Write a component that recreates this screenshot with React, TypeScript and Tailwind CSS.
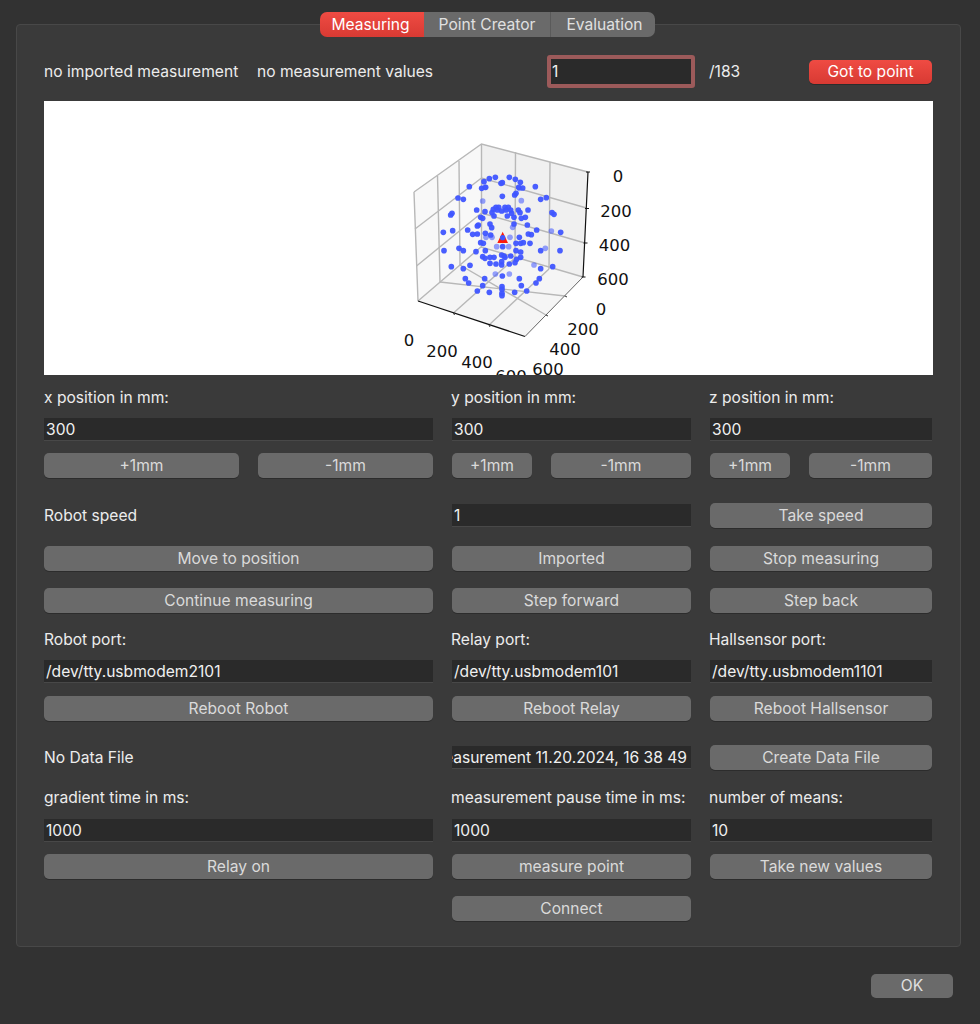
import React from "react";

const ROW = "grid grid-cols-[389px_239px_222px] gap-x-[19px] items-center";
const BTN =
  "flex items-center justify-center rounded-[5px] bg-[#6a6a6a] text-[#dadada] shadow-[0_1px_0_#2c2c2c] h-[25px] w-full";
const FIELD =
  "flex items-center h-[23px] w-full bg-[#2a2a2a] border-b border-[#484848] pl-[2px] pt-[2px] text-[#f0f0f0] overflow-hidden whitespace-nowrap";

function Btn({ children }: { children: React.ReactNode }) {
  return <div className={BTN}>{children}</div>;
}
function Field({ children }: { children: React.ReactNode }) {
  return <div className={FIELD}>{children}</div>;
}
function Label({ children, shift }: { children: React.ReactNode; shift?: boolean }) {
  return (
    <div className={`h-[20px] pt-[1px] flex items-center whitespace-nowrap text-[#ececec] ${shift ? "-ml-[1px]" : ""}`}>
      {children}
    </div>
  );
}

const solid: [number, number][] = [
  [282,155],[298,146],[316,142],[358,142],[376,148],[391,157],[337,158],[333,160],[238,170],[275,175],[287,172],[386,172],[398,174],[436,170],[378,190],[374,195],[337,199],[204,204],[220,208],[452,208],[469,203],
  [318,232],[326,232],[310,238],[322,240],[345,232],[355,232],[362,240],[348,240],[335,243],[306,248],[285,245],[260,240],[385,240],[414,240],[390,248],[365,250],[186,250],[182,255],[486,248],[492,253],[272,262],[278,265],[312,258],[352,258],[372,262],[394,265],[406,262],[265,285],[262,288],[300,282],[372,282],[412,285],[305,293],[233,300],[160,307],[188,302],[440,300],[512,307],[248,313],[262,312],[302,315],[286,310],[388,322],[415,312],[424,314],
  [272,338],[280,340],[378,340],[392,340],[400,338],[420,340],[338,350],[162,362],[207,355],[220,362],[452,362],[510,362],[258,365],[286,362],[378,362],[392,366],[278,380],[285,385],[300,382],[312,382],[335,375],[342,378],[345,382],[362,378],[380,388],[392,382],[300,400],[318,402],[335,395],[335,405],[358,402],[375,398],[240,406],[184,410],[220,416],[452,416],[488,410],[337,438],[226,446],[236,459],[284,446],[388,446],[448,446],[438,459],[278,467],[394,467],[336,470],[336,478],[262,483],[298,487],[374,487],[410,483],[336,490],[336,497],
];
const faint: [number, number][] = [
  [278,213],[394,212],[368,292],[484,303],[288,322],[306,322],[360,322],[320,350],[356,350],[466,355],[432,405],[316,432],[358,432],[285,172],[388,175],
];

function Plot() {
  const grid = "#b8b8b8";
  return (
    <svg width="889" height="274" viewBox="0 0 889 274" className="block bg-white">
      <g transform="translate(-44 -101)">
        <polygon points="414,192 481.5,144 481,247 418,301" fill="#f8f8f8" />
        <polygon points="481.5,144 588,172 583,277 481,247" fill="#f0f0f0" />
        <polygon points="418,301 481,247 583,277 525,336.5" fill="#f5f5f5" />
        <g stroke={grid} strokeWidth="1.4" fill="none">
          <path d="M414 192L481.5 144L588 172M414 192L418 301M481.5 144V247" />
          <path d="M437.5 176L440 282M459 161L460 265M515.5 152L515 258M550 162L549 269" />
          <path d="M415 229L481.5 178L586.500 208M416.500 266L481.500 213L585 243M418 301L481 247L583 277" />
          <path d="M453.500 313L515 258M489 325L549 269M546 315L460 265M565 296L440 282" />
        </g>
        <path d="M418 301L525 336.500" stroke="#111" strokeWidth="1.300" fill="none" />
        <path d="M525 336.500L583 277" stroke="#666" strokeWidth="1" fill="none" />
        <path d="M588 172L583 277M586 172H590M585 208.500H589M583.500 243H587.500M581.500 277H585.500" stroke="#111" strokeWidth="1.200" fill="none" />
        <path d="M453.500 313l1 2M489 325l1 2M546 315l2 1M565 296l2 1" stroke="#333" strokeWidth="1" fill="none" />
        <g transform="translate(390 130) scale(0.33333)">
          {faint.map(([x, y], i) => (
            <circle key={i} cx={x} cy={y} r="8.500" fill="#3f55ff" fillOpacity="0.55" />
          ))}
          {solid.map(([x, y], i) => (
            <circle key={i} cx={x} cy={y} r="8.500" fill="#3f55ff" fillOpacity="0.95" />
          ))}
          <polygon points="338,305 322,339 354,339" fill="#ff1a0a" />
          <circle cx="338" cy="323" r="8" fill="#3f55ff" />
        </g>
        <g fontFamily="'DejaVu Sans', sans-serif" fontSize="16.500" fill="#111" dominantBaseline="central" textAnchor="middle">
          <text x="618" y="176">0</text>
          <text x="616" y="211">200</text>
          <text x="614.500" y="245">400</text>
          <text x="613" y="279">600</text>
          <text x="601" y="309">0</text>
          <text x="583" y="329">200</text>
          <text x="565" y="349">400</text>
          <text x="548" y="369">600</text>
          <text x="409" y="340">0</text>
          <text x="442" y="351">200</text>
          <text x="477" y="362">400</text>
          <text x="511" y="376">600</text>
        </g>
      </g>
    </svg>
  );
}

export default function App() {
  return (
    <div className="w-[980px] h-[1024px] bg-[#323232] pt-[24px] pl-[16px] font-['Inter','Liberation_Sans',sans-serif] text-[15.600px] leading-none overflow-hidden">
      <div className="relative w-[945px] h-[923px] bg-[#3a3a3a] border border-[#484848] rounded-[4px] pt-[30px] pl-[27px]">
        <div className="absolute left-[303px] top-[-13px] flex h-[25px] w-[335px] rounded-[7px] overflow-hidden">
          <div className="w-[104px] pr-[3px] flex items-center justify-center bg-gradient-to-b from-[#ef4b43] to-[#d83a33] text-white">Measuring</div>
          <div className="w-[127px] flex items-center justify-center bg-[#6a6a6a] text-[#e0e0e0] border-r border-[#5a5a5a]">Point Creator</div>
          <div className="flex-1 pl-[3px] flex items-center justify-center bg-[#6a6a6a] text-[#e0e0e0]">Evaluation</div>
        </div>

        <div className="flex items-center h-[33px] text-[#ececec]">
          <div className="w-[213px] pt-[1px]">no imported measurement</div>
          <div className="w-[290px] pt-[1px]">no measurement values</div>
          <div className="w-[148px] h-[33px] rounded-[3px] border-[4px] border-[#9c5a5a] bg-[#2a2a2a] flex items-center pl-[1px] pt-[1px] text-[#f0f0f0]">1</div>
          <div className="ml-[14px] w-[100px] pt-[1px]">/183</div>
          <div className="w-[123px] h-[24px] rounded-[5px] bg-gradient-to-b from-[#ef4b43] to-[#d83a33] flex items-center justify-center text-white shadow-[0_1px_0_#2c2c2c]">Got to point</div>
        </div>

        <div className="mt-[13px] h-[274px] w-[889px]">
          <Plot />
        </div>

        <div className={`${ROW} mt-[12px]`}>
          <Label>x position in mm:</Label>
          <Label shift>y position in mm:</Label>
          <Label shift>z position in mm:</Label>
        </div>
        <div className={`${ROW} mt-[11px]`}>
          <Field>300</Field>
          <Field>300</Field>
          <Field>300</Field>
        </div>
        <div className={`${ROW} mt-[12px]`}>
          <div className="flex gap-x-[19px]">
            <div className="w-[195px]"><Btn>+1mm</Btn></div>
            <div className="w-[175px]"><Btn>-1mm</Btn></div>
          </div>
          <div className="flex gap-x-[19px]">
            <div className="w-[80px]"><Btn>+1mm</Btn></div>
            <div className="w-[140px]"><Btn>-1mm</Btn></div>
          </div>
          <div className="flex gap-x-[19px]">
            <div className="w-[80px]"><Btn>+1mm</Btn></div>
            <div className="w-[123px]"><Btn>-1mm</Btn></div>
          </div>
        </div>

        <div className={`${ROW} mt-[25px]`}>
          <Label>Robot speed</Label>
          <Field>1</Field>
          <Btn>Take speed</Btn>
        </div>
        <div className={`${ROW} mt-[18px]`}>
          <Btn>Move to position</Btn>
          <Btn>Imported</Btn>
          <Btn>Stop measuring</Btn>
        </div>
        <div className={`${ROW} mt-[17px]`}>
          <Btn>Continue measuring</Btn>
          <Btn>Step forward</Btn>
          <Btn>Step back</Btn>
        </div>

        <div className={`${ROW} mt-[16px]`}>
          <Label>Robot port:</Label>
          <Label shift>Relay port:</Label>
          <Label shift>Hallsensor port:</Label>
        </div>
        <div className={`${ROW} mt-[11px]`}>
          <Field>/dev/tty.usbmodem2101</Field>
          <Field>/dev/tty.usbmodem101</Field>
          <Field>/dev/tty.usbmodem1101</Field>
        </div>
        <div className={`${ROW} mt-[13px]`}>
          <Btn>Reboot Robot</Btn>
          <Btn>Reboot Relay</Btn>
          <Btn>Reboot Hallsensor</Btn>
        </div>

        <div className={`${ROW} mt-[24px]`}>
          <Label>No Data File</Label>
          <div className={`${FIELD} justify-end pr-[4px]`}>
            <span className="shrink-0">Measurement 11.20.2024, 16 38 49</span>
          </div>
          <Btn>Create Data File</Btn>
        </div>

        <div className={`${ROW} mt-[17px]`}>
          <Label>gradient time in ms:</Label>
          <Label shift>measurement pause time in ms:</Label>
          <Label shift>number of means:</Label>
        </div>
        <div className={`${ROW} mt-[12px]`}>
          <Field>1000</Field>
          <Field>1000</Field>
          <Field>10</Field>
        </div>
        <div className={`${ROW} mt-[12px]`}>
          <Btn>Relay on</Btn>
          <Btn>measure point</Btn>
          <Btn>Take new values</Btn>
        </div>
        <div className={`${ROW} mt-[17px]`}>
          <div />
          <Btn>Connect</Btn>
          <div />
        </div>
      </div>
      <div className="flex justify-end w-[937px] mt-[27px]">
        <div className="w-[82px] h-[24px] rounded-[5px] bg-[#6a6a6a] text-[#e0e0e0] flex items-center justify-center">OK</div>
      </div>
    </div>
  );
}
